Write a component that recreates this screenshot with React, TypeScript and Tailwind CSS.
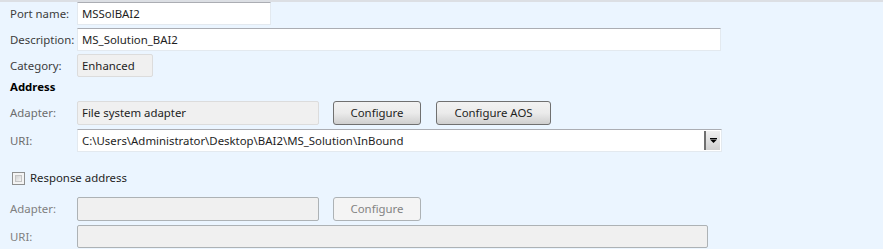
const font = { fontFamily: '"Segoe UI", "Noto Sans", Arial, sans-serif' };

function Label({ text, tone = 'text-[#3c3c3c]' }: { text: string; tone?: string }) {
    return <div className={`w-[67px] shrink-0 text-[11.4px] ${tone}`}>{text}</div>;
}

function TextBox({ value, className = '' }: { value: string; className?: string }) {
    return (
        <div
            className={`flex h-[23px] items-center border border-[#e3e9ef] border-t-[#abadb3] bg-white pl-[4px] text-[11.4px] text-[#1e1e1e] ${className}`}
        >
            {value}
        </div>
    );
}

function ReadBox({ value, className = '' }: { value?: string; className?: string }) {
    return (
        <div
            className={`flex items-center rounded-[2px] border border-[#dcdcdc] bg-[#f0f0f0] pl-[4px] text-[11.4px] text-[#1e1e1e] ${className}`}
        >
            {value}
        </div>
    );
}

function Button({ text, width, disabled }: { text: string; width: string; disabled?: boolean }) {
    return (
        <button
            type="button"
            className={`flex h-[24px] items-center justify-center rounded-[3px] border text-[11.4px] ${width} ${
                disabled
                    ? 'border-[#adb2b5] bg-[#f4f4f4] text-[#838383]'
                    : 'border-[#707070] bg-gradient-to-b from-[#f2f2f2] via-[#ebebeb] to-[#cfcfcf] text-[#1e1e1e]'
            }`}
        >
            {text}
        </button>
    );
}

export default function App() {
    return (
        <div style={font} className="h-[249px] w-[883px] overflow-hidden border-t-2 border-[#dcdfe4] bg-[#ebf5ff]">
            <div className="flex items-center pl-[10px]">
                <Label text="Port name:" />
                <TextBox value="MSSolBAI2" className="w-[194px]" />
            </div>
            <div className="mt-[3px] flex items-center pl-[10px]">
                <Label text="Description:" />
                <TextBox value="MS_Solution_BAI2" className="w-[644px]" />
            </div>
            <div className="mt-[3px] flex items-center pl-[10px]">
                <Label text="Category:" />
                <ReadBox value="Enhanced" className="h-[23px] w-[76px]" />
            </div>

            <div className="mt-[1px] h-[18px] pl-[10px] text-[11.4px] font-bold leading-[18px] text-black">Address</div>
            <div className="mt-[5px] flex h-[24px] items-center pl-[10px]">
                <Label text="Adapter:" tone="text-[#6d6d6d]" />
                <ReadBox value="File system adapter" className="h-[24px] w-[242px]" />
                <div className="ml-[14px]">
                    <Button text="Configure" width="w-[88px]" />
                </div>
                <div className="ml-[15px]">
                    <Button text="Configure AOS" width="w-[115px]" />
                </div>
            </div>
            <div className="mt-[4px] flex h-[23px] items-center pl-[10px]">
                <Label text="URI:" tone="text-[#6d6d6d]" />
                <div className="flex h-[23px] w-[645px] items-center border border-[#e3e9ef] border-t-[#abadb3] bg-white text-[11.4px] text-[#1e1e1e]">
                    <span className="flex-1 pl-[4px]">C:\Users\Administrator\Desktop\BAI2\MS_Solution\InBound</span>
                    <div className="mr-[1px] flex h-[19px] w-[16px] items-center justify-center border-l-2 border-[#707070] bg-gradient-to-b from-[#f0f0f0] to-[#d0d0d0]">
                        <svg width="7" height="5" viewBox="0 0 7 5">
                            <rect x="0" y="0" width="7" height="1" fill="#000" />
                            <path d="M0 1.5 H7 L3.5 5 Z" fill="#000" />
                        </svg>
                    </div>
                </div>
            </div>

            <div className="mt-[17px] flex h-[18px] items-center pl-[12px] text-[11.4px] text-[#1e1e1e]">
                <div className="h-[13px] w-[13px] border border-[#8e8f8f] bg-[#f4f4f4] p-[2px]">
                    <div className="h-full w-full border border-[#c4c4c4] bg-gradient-to-br from-[#d2d2d2] to-[#f4f4f4]" />
                </div>
                <span className="ml-[5px]">Response address</span>
            </div>

            <div className="mt-[10px] flex h-[24px] items-center pl-[10px]">
                <Label text="Adapter:" tone="text-[#808080]" />
                <div className="h-[24px] w-[242px] rounded-[2px] border border-[#adb2b5] bg-[#f0f0f0]" />
                <div className="ml-[14px]">
                    <Button text="Configure" width="w-[88px]" disabled />
                </div>
            </div>
            <div className="mt-[4px] flex h-[23px] items-center pl-[10px]">
                <Label text="URI:" tone="text-[#808080]" />
                <div className="h-[23px] w-[631px] rounded-[2px] border border-[#adb2b5] bg-[#f0f0f0]" />
            </div>
        </div>
    );
}
